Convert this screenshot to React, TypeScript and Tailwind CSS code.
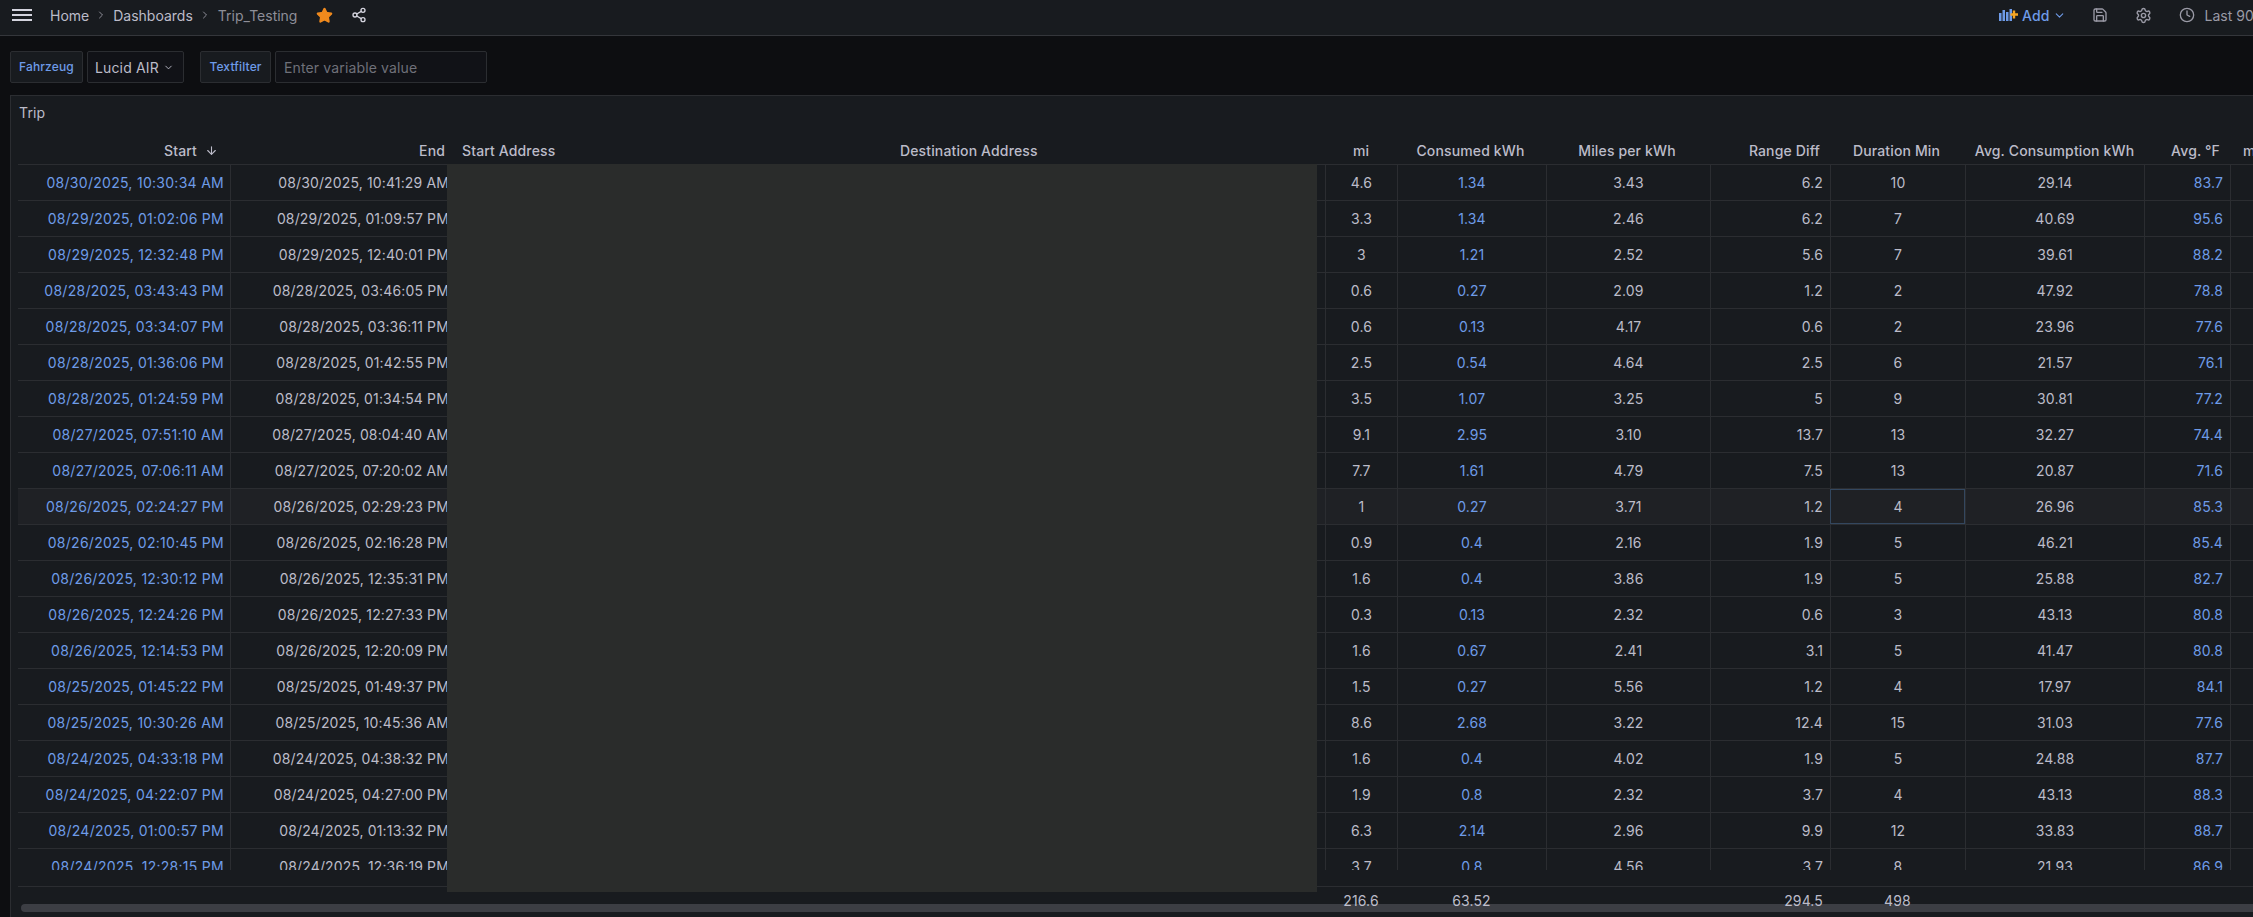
import React from 'react'
import { ArrowDown, ChevronDown, ChevronRight, Clock, Save, Settings, Share2, Star } from 'lucide-react'

const rows = [
  ['08/30/2025, 10:30:34 AM', '08/30/2025, 10:41:29 AM', '4.6', '1.34', '3.43', '6.2', '10', '29.14', '83.7'],
  ['08/29/2025, 01:02:06 PM', '08/29/2025, 01:09:57 PM', '3.3', '1.34', '2.46', '6.2', '7', '40.69', '95.6'],
  ['08/29/2025, 12:32:48 PM', '08/29/2025, 12:40:01 PM', '3', '1.21', '2.52', '5.6', '7', '39.61', '88.2'],
  ['08/28/2025, 03:43:43 PM', '08/28/2025, 03:46:05 PM', '0.6', '0.27', '2.09', '1.2', '2', '47.92', '78.8'],
  ['08/28/2025, 03:34:07 PM', '08/28/2025, 03:36:11 PM', '0.6', '0.13', '4.17', '0.6', '2', '23.96', '77.6'],
  ['08/28/2025, 01:36:06 PM', '08/28/2025, 01:42:55 PM', '2.5', '0.54', '4.64', '2.5', '6', '21.57', '76.1'],
  ['08/28/2025, 01:24:59 PM', '08/28/2025, 01:34:54 PM', '3.5', '1.07', '3.25', '5', '9', '30.81', '77.2'],
  ['08/27/2025, 07:51:10 AM', '08/27/2025, 08:04:40 AM', '9.1', '2.95', '3.10', '13.7', '13', '32.27', '74.4'],
  ['08/27/2025, 07:06:11 AM', '08/27/2025, 07:20:02 AM', '7.7', '1.61', '4.79', '7.5', '13', '20.87', '71.6'],
  ['08/26/2025, 02:24:27 PM', '08/26/2025, 02:29:23 PM', '1', '0.27', '3.71', '1.2', '4', '26.96', '85.3'],
  ['08/26/2025, 02:10:45 PM', '08/26/2025, 02:16:28 PM', '0.9', '0.4', '2.16', '1.9', '5', '46.21', '85.4'],
  ['08/26/2025, 12:30:12 PM', '08/26/2025, 12:35:31 PM', '1.6', '0.4', '3.86', '1.9', '5', '25.88', '82.7'],
  ['08/26/2025, 12:24:26 PM', '08/26/2025, 12:27:33 PM', '0.3', '0.13', '2.32', '0.6', '3', '43.13', '80.8'],
  ['08/26/2025, 12:14:53 PM', '08/26/2025, 12:20:09 PM', '1.6', '0.67', '2.41', '3.1', '5', '41.47', '80.8'],
  ['08/25/2025, 01:45:22 PM', '08/25/2025, 01:49:37 PM', '1.5', '0.27', '5.56', '1.2', '4', '17.97', '84.1'],
  ['08/25/2025, 10:30:26 AM', '08/25/2025, 10:45:36 AM', '8.6', '2.68', '3.22', '12.4', '15', '31.03', '77.6'],
  ['08/24/2025, 04:33:18 PM', '08/24/2025, 04:38:32 PM', '1.6', '0.4', '4.02', '1.9', '5', '24.88', '87.7'],
  ['08/24/2025, 04:22:07 PM', '08/24/2025, 04:27:00 PM', '1.9', '0.8', '2.32', '3.7', '4', '43.13', '88.3'],
  ['08/24/2025, 01:00:57 PM', '08/24/2025, 01:13:32 PM', '6.3', '2.14', '2.96', '9.9', '12', '33.83', '88.7'],
  ['08/24/2025, 12:28:15 PM', '08/24/2025, 12:36:19 PM', '3.7', '0.8', '4.56', '3.7', '8', '21.93', '86.9'],
]

const gridCols =
  'grid grid-cols-[212px_224px_439px_432px_72px_149px_164px_120px_135px_179px_86px_40px]'
const cellBase = 'flex items-center border-l border-[#2b2d31] whitespace-nowrap overflow-hidden'
const right = `${cellBase} justify-end pr-[7px]`
const center = `${cellBase} justify-center`
const link = 'text-[#6e9be8]'

const Row = ({ r, index }: { r: string[]; index: number }) => {
  const hovered = index === 9
  return (
    <div className={`${gridCols} h-[36px] border-b border-[#2b2d31] ${hovered ? 'bg-[#1f2125]' : ''}`}>
      <div className={`flex items-center justify-end overflow-hidden whitespace-nowrap pr-[6px] tracking-[0.02em] ${link}`}>
        {r[0]}
      </div>
      <div className={`${cellBase} justify-end pr-[5px]`}>{r[1]}</div>
      <div className={cellBase} />
      <div className={cellBase} />
      <div className={center}>{r[2]}</div>
      <div className={`${center} ${link}`}>{r[3]}</div>
      <div className={center}>{r[4]}</div>
      <div className={right}>{r[5]}</div>
      <div
        className={`${center} ${hovered ? 'outline outline-1 -outline-offset-1 outline-[#33475f]' : ''}`}
      >
        {r[6]}
      </div>
      <div className={center}>{r[7]}</div>
      <div className={`${right} ${link}`}>{r[8]}</div>
      <div className={cellBase} />
    </div>
  )
}

const AddPanelIcon = () => (
  <svg width="19" height="14" viewBox="0 0 19 14" className="shrink-0">
    <rect x="0" y="5" width="2.5" height="8" fill="#6e9be8" />
    <rect x="3.5" y="2" width="2.5" height="11" fill="#6e9be8" />
    <rect x="7" y="4" width="2.5" height="9" fill="#6e9be8" />
    <rect x="10.5" y="1" width="2.5" height="12" fill="#6e9be8" />
    <path d="M15 2.5v8M11.5 6.5h7.5" stroke="#f5a623" strokeWidth="2.4" />
  </svg>
)

const App: React.FC = () => {
  return (
    <div className="relative flex h-[917px] w-[2253px] flex-col overflow-hidden bg-[#0d0e11] text-[14px] tracking-[0.01em] text-[#bcbcc9] [font-family:Inter,sans-serif]">
      {/* top bar */}
      <div className="flex h-[36px] shrink-0 items-center overflow-hidden border-b border-[#34363b] bg-[#181b1f] pb-[5px]">
        <div className="flex w-[1999px] shrink-0 items-center pl-[12px] tracking-normal">
          <svg width="20" height="12" viewBox="0 0 20 12" className="mr-[18px]">
            <path d="M0 1h20M0 6h20M0 11h20" stroke="#d4d4de" strokeWidth="1.8" />
          </svg>
          <span>Home</span>
          <ChevronRight size={12} className="mx-[6px] text-[#8e8e98]" />
          <span>Dashboards</span>
          <ChevronRight size={12} className="ml-[6px] mr-[7px] text-[#8e8e98]" />
          <span className="text-[#8e8e98]">Trip_Testing</span>
          <Star size={17} className="ml-[19px] fill-[#f08a1d] text-[#f08a1d]" />
          <Share2 size={16} className="ml-[18px] text-[#d4d4de]" />
        </div>
        <AddPanelIcon />
        <span className="ml-[4px] shrink-0 font-medium text-[#6e9be8]">Add</span>
        <ChevronDown size={13} className="ml-[3px] shrink-0 text-[#6e9be8]" />
        <Save size={16} className="ml-[26px] shrink-0 text-[#9a9aa6]" />
        <Settings size={17} className="ml-[27px] shrink-0 text-[#9a9aa6]" />
        <Clock size={16} className="ml-[27px] shrink-0 text-[#9a9aa6]" />
        <span className="ml-[10px] shrink-0 whitespace-nowrap tracking-normal text-[#9a9aa6]">Last 90</span>
      </div>

      {/* variables */}
      <div className="ml-[10px] mt-[15px] flex h-[32px] shrink-0 items-stretch">
        <div className="flex w-[73px] items-center justify-center rounded-[2px] border border-[#2b2d31] bg-[#181b1f] text-[12px] font-medium text-[#6e9be8]">
          Fahrzeug
        </div>
        <div className="ml-[4px] flex w-[97px] items-center rounded-[2px] border border-[#2b2d31] bg-[#111217] pl-[7px]">
          Lucid AIR
          <ChevronDown size={11} className="ml-[4px]" />
        </div>
        <div className="ml-[16px] flex w-[71px] items-center justify-center rounded-[2px] border border-[#2b2d31] bg-[#181b1f] text-[12px] font-medium text-[#6e9be8]">
          Textfilter
        </div>
        <div className="ml-[4px] flex w-[212px] items-center rounded-[2px] border border-[#2b2d31] bg-[#111217] pl-[8px] text-[#6f7079]">
          Enter variable value
        </div>
      </div>

      {/* panel */}
      <div className="relative ml-[10px] mt-[12px] flex min-h-0 flex-1 flex-col border-l border-t border-[#2b2d31] bg-[#181b1f] pl-[7px]">
        <div className="h-[35px] shrink-0 pl-[1px] pt-[6px]">Trip</div>
        <div className={`${gridCols} h-[34px] shrink-0 items-center border-b border-[#2b2d31] pt-[6px] font-medium`}>
          <div className="flex items-center justify-end pr-[12px]">
            Start
            <ArrowDown size={13} className="ml-[8px]" />
          </div>
          <div className="pr-[9px] text-right">End</div>
          <div className="pl-[8px]">Start Address</div>
          <div className="pl-[7px]">Destination Address</div>
          <div className="text-center">mi</div>
          <div className="pr-[2px] text-center">Consumed kWh</div>
          <div className="pr-[2px] text-center">Miles per kWh</div>
          <div className="pr-[10px] text-right">Range Diff</div>
          <div className="pr-[2px] text-center">Duration Min</div>
          <div className="text-center">Avg. Consumption kWh</div>
          <div className="pr-[10px] text-right">Avg. °F</div>
          <div className="pl-[13px]">m</div>
        </div>
        <div className="h-[705px] shrink-0 overflow-hidden">
          {rows.map((r, i) => (
            <Row key={r[0]} r={r} index={i} />
          ))}
        </div>
        <div className={`${gridCols} mt-[16px] min-h-0 flex-1 border-t border-[#2b2d31] pt-[3px]`}>
          <div />
          <div />
          <div />
          <div />
          <div className="text-center">216.6</div>
          <div className="text-center">63.52</div>
          <div />
          <div className="pr-[7px] text-right">294.5</div>
          <div className="text-center">498</div>
        </div>

        {/* redacted address block */}
        <div className="absolute left-[436px] top-[68px] h-[728px] w-[870px] bg-[#2a2c2b]" />
        {/* horizontal scrollbar */}
        <div className="absolute bottom-[5px] left-[10px] right-0 h-[8px] rounded-l-full bg-[#ccccdc]/20" />
      </div>
    </div>
  )
}

export default App
